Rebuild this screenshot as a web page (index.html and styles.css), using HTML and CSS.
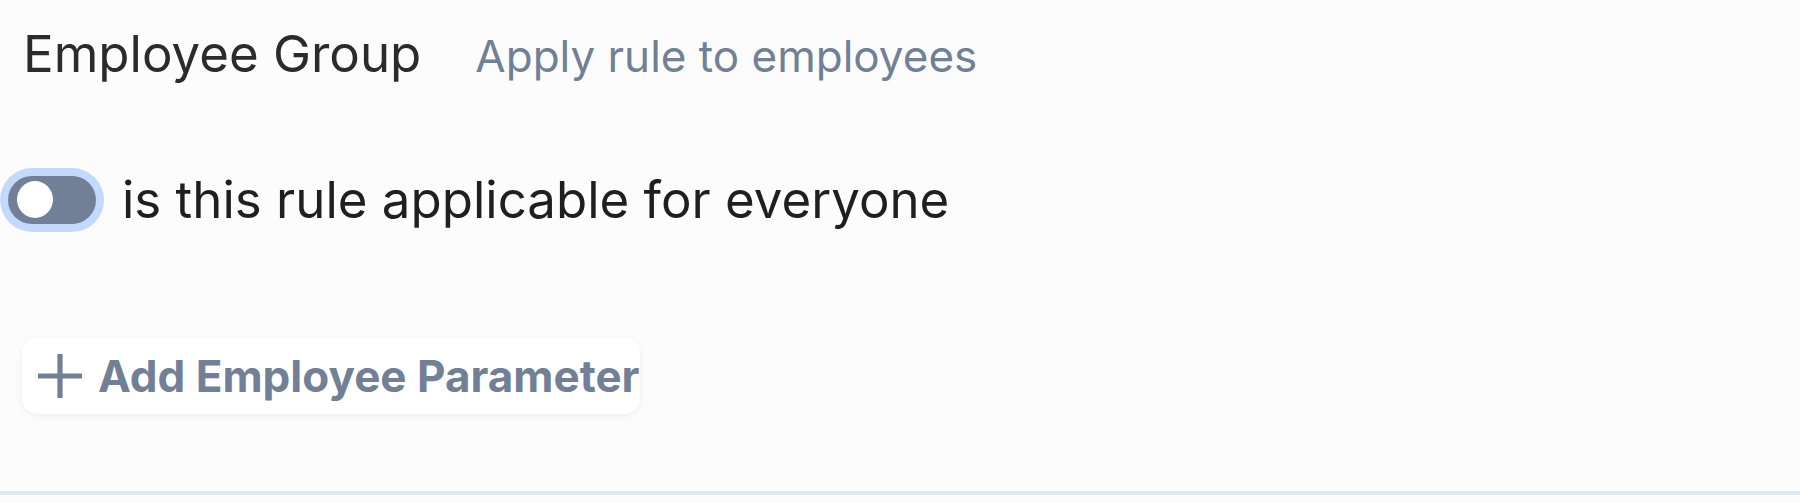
FILE: index.html
```html
<!DOCTYPE html>
<html lang="en">
<head>
    <meta charset="UTF-8">
    <meta name="viewport" content="width=device-width, initial-scale=1.0">
    <title>Employee Group</title>
    <link rel="stylesheet" href="styles.css">
</head>
<body>
    <section class="rule-section">
        <div class="section-header">
            <h2 class="section-title">Employee Group</h2>
            <span class="section-subtitle">Apply rule to employees</span>
        </div>

        <label class="toggle-row">
            <span class="toggle">
                <input type="checkbox" class="toggle-input">
                <span class="toggle-knob"></span>
            </span>
            <span class="toggle-label">is this rule applicable for everyone</span>
        </label>

        <div class="actions">
            <button type="button" class="add-button">
                <svg class="add-icon" viewBox="0 0 24 24" width="48" height="48">
                    <path d="M12 1v22M1 12h22" stroke="currentColor" stroke-width="2.6" fill="none"/>
                </svg>
                <span>Add Employee Parameter</span>
            </button>
        </div>
    </section>
</body>
</html>
```

FILE: styles.css
```css
body {
    margin: 0;
    background-color: #fcfcfc;
    font-family: Inter, "Noto Sans", sans-serif;
}
.rule-section {
    height: 495px;
    border-bottom: 4px solid #e2e8f0;
    padding-top: 23px;
    box-sizing: border-box;
}
.section-header {
    display: flex;
    align-items: baseline;
    gap: 54px;
    padding-left: 23px;
}
.section-title {
    margin: 0;
    font-size: 51px;
    font-weight: 400;
    color: #2b2b2b;
}
.section-subtitle {
    font-size: 44px;
    color: #718096;
}
.toggle-row {
    display: flex;
    align-items: center;
    gap: 26px;
    margin-top: 85px;
    padding-left: 8px;
}
.toggle {
    position: relative;
    flex-shrink: 0;
    width: 88px;
    height: 48px;
    border-radius: 24px;
    background-color: #718096;
    box-shadow: 0 0 0 8px #c3dafe;
}
.toggle-input {
    display: none;
}
.toggle-knob {
    position: absolute;
    top: 5px;
    left: 9px;
    width: 36px;
    height: 37px;
    border-radius: 50%;
    background-color: #fff;
}
.toggle-label {
    font-size: 51px;
    color: #1f1f1f;
}
.actions {
    margin-top: 108px;
    padding-left: 22px;
}
.add-button {
    display: flex;
    align-items: center;
    gap: 14px;
    height: 76px;
    padding: 0 0 0 14px;
    border: none;
    border-radius: 15px;
    background-color: #fff;
    box-shadow: 0 2px 6px rgba(0, 0, 0, 0.06);
    font-family: inherit;
    font-size: 44px;
    font-weight: 700;
    color: #718096;
    cursor: pointer;
}
.add-icon {
    flex-shrink: 0;
}
```
